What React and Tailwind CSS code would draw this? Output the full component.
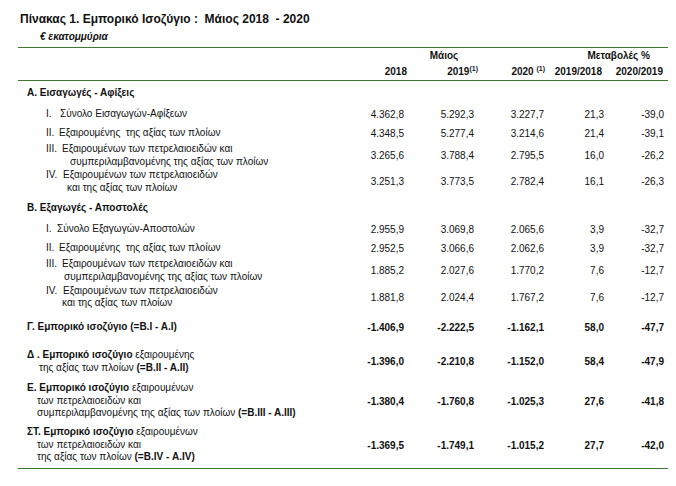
import React from "react";

const font = { fontFamily: '"Liberation Sans", Arial, sans-serif' };

const cols = "grid grid-cols-[316px_70px_70px_70px_60px_60px_4px]";

function Nums({ values, bold }) {
  return values.map((v, i) => (
    <div key={i} className={"text-right self-center " + (bold ? "font-bold" : "")}>
      {v}
    </div>
  ));
}

function Item({ num, numW, first, rest, restPl, h, values }) {
  return (
    <div className={cols + " " + h}>
      <div className="self-center leading-[12.5px]">
        <div className="pl-[28px] whitespace-pre">
          <span className={"inline-block " + numW}>{num}</span>
          {first}
        </div>
        {rest && <div className={restPl}>{rest}</div>}
      </div>
      <Nums values={values} />
      <div />
    </div>
  );
}

function Section({ title, h }) {
  return (
    <div className={cols + " " + h}>
      <div className="self-center pl-[9px] font-bold">{title}</div>
    </div>
  );
}

function Total({ lines, h, values }) {
  return (
    <div className={cols + " " + h}>
      <div className="self-center leading-[12.5px]">{lines}</div>
      <Nums values={values} bold />
      <div />
    </div>
  );
}

export default function App() {
  return (
    <div className="w-[676px] h-[486px] bg-white text-[#111] text-[10px]" style={font}>
      <div className="pt-[11px] pl-[20px] text-[12px] leading-[16px] font-bold whitespace-pre">
        Πίνακας 1. Εμπορικό Ισοζύγιο :  Μάιος 2018  - 2020
      </div>
      <div className="mt-[4px] pl-[40px] leading-[12px] font-bold italic">€ εκατομμύρια</div>

      <div className="mt-[4px] ml-[18px] w-[650px] border-b border-[#3b7a2f]">
        <div className="border-y border-[#3b7a2f] font-bold">
          <div className="grid grid-cols-[316px_73px_71px_67px_57px_61px_5px] h-[14px] items-center">
            <div />
            <div className="col-span-3 text-center pl-[9px]">Μάιος</div>
            <div className="col-span-2 text-right pr-[13px]">Μεταβολές %</div>
          </div>
          <div className="grid grid-cols-[316px_73px_71px_67px_57px_61px_5px] h-[18px] items-center">
            <div />
            <div className="text-right">2018</div>
            <div className="text-right">
              2019<sup className="text-[7px]">(1)</sup>
            </div>
            <div className="text-right whitespace-pre">
              2020 <sup className="text-[7px]">(1)</sup>
            </div>
            <div className="text-right">2019/2018</div>
            <div className="text-right">2020/2019</div>
          </div>
        </div>

        <Section title="Α. Εισαγωγές - Αφίξεις" h="h-[22px]" />
        <Item num="I." numW="w-[14px]" first="Σύνολο Εισαγωγών-Αφίξεων" h="h-[22px]" values={["4.362,8", "5.292,3", "3.227,7", "21,3", "-39,0"]} />
        <Item num="II." numW="w-[13px]" first="Εξαιρουμένης  της αξίας των πλοίων" h="h-[17px]" values={["4.348,5", "5.277,4", "3.214,6", "21,4", "-39,1"]} />
        <Item num="III." numW="w-[16px]" first="Εξαιρουμένων των πετρελαιοειδών και" rest="συμπεριλαμβανομένης της αξίας των πλοίων" restPl="pl-[52px]" h="h-[27px]" values={["3.265,6", "3.788,4", "2.795,5", "16,0", "-26,2"]} />
        <Item num="IV." numW="w-[17px]" first="Εξαιρουμένων των πετρελαιοειδών" rest="και της αξίας των πλοίων" restPl="pl-[49px]" h="h-[25px]" values={["3.251,3", "3.773,5", "2.782,4", "16,1", "-26,3"]} />

        <Section title="Β. Εξαγωγές - Αποστολές" h="h-[26px]" />
        <Item num="I." numW="w-[11px]" first="Σύνολο Εξαγωγών-Αποστολών" h="h-[18px]" values={["2.955,9", "3.069,8", "2.065,6", "3,9", "-32,7"]} />
        <Item num="II." numW="w-[13px]" first="Εξαιρουμένης  της αξίας των πλοίων" h="h-[20px]" values={["2.952,5", "3.066,6", "2.062,6", "3,9", "-32,7"]} />
        <Item num="III." numW="w-[16px]" first="Εξαιρουμένων των πετρελαιοειδών και" rest="συμπεριλαμβανομένης της αξίας των πλοίων" restPl="pl-[46px]" h="h-[25px]" values={["1.885,2", "2.027,6", "1.770,2", "7,6", "-12,7"]} />
        <Item num="IV." numW="w-[17px]" first="Εξαιρουμένων των πετρελαιοειδών" rest="και της αξίας των πλοίων" restPl="pl-[44px]" h="h-[28px]" values={["1.881,8", "2.024,4", "1.767,2", "7,6", "-12,7"]} />

        <Total
          h="h-[32px]"
          values={["-1.406,9", "-2.222,5", "-1.162,1", "58,0", "-47,7"]}
          lines={<div className="pl-[9px] font-bold">Γ. Εμπορικό ισοζύγιο (=Β.Ι - Α.Ι)</div>}
        />
        <Total
          h="h-[37px]"
          values={["-1.396,0", "-2.210,8", "-1.152,0", "58,4", "-47,9"]}
          lines={
            <>
              <div className="pl-[9px]">
                <b>Δ . Εμπορικό ισοζύγιο</b> εξαιρουμένης
              </div>
              <div className="pl-[21px]">
                της αξίας των πλοίων <b>(=Β.ΙΙ - Α.ΙΙ)</b>
              </div>
            </>
          }
        />
        <Total
          h="h-[42px]"
          values={["-1.380,4", "-1.760,8", "-1.025,3", "27,6", "-41,8"]}
          lines={
            <>
              <div className="pl-[9px]">
                <b>Ε. Εμπορικό ισοζύγιο</b> εξαιρουμένων
              </div>
              <div className="pl-[19px]">των πετρελαιοειδών και</div>
              <div className="pl-[19px]">
                συμπεριλαμβανομένης της αξίας των πλοίων <b>(=Β.ΙΙΙ - Α.ΙΙΙ)</b>
              </div>
            </>
          }
        />
        <Total
          h="h-[46px]"
          values={["-1.369,5", "-1.749,1", "-1.015,2", "27,7", "-42,0"]}
          lines={
            <>
              <div className="pl-[9px]">
                <b>ΣΤ. Εμπορικό ισοζύγιο</b> εξαιρουμένων
              </div>
              <div className="pl-[19px]">των πετρελαιοειδών και</div>
              <div className="pl-[19px]">
                της αξίας των πλοίων <b>(=Β.ΙV - Α.ΙV)</b>
              </div>
            </>
          }
        />
      </div>
    </div>
  );
}
